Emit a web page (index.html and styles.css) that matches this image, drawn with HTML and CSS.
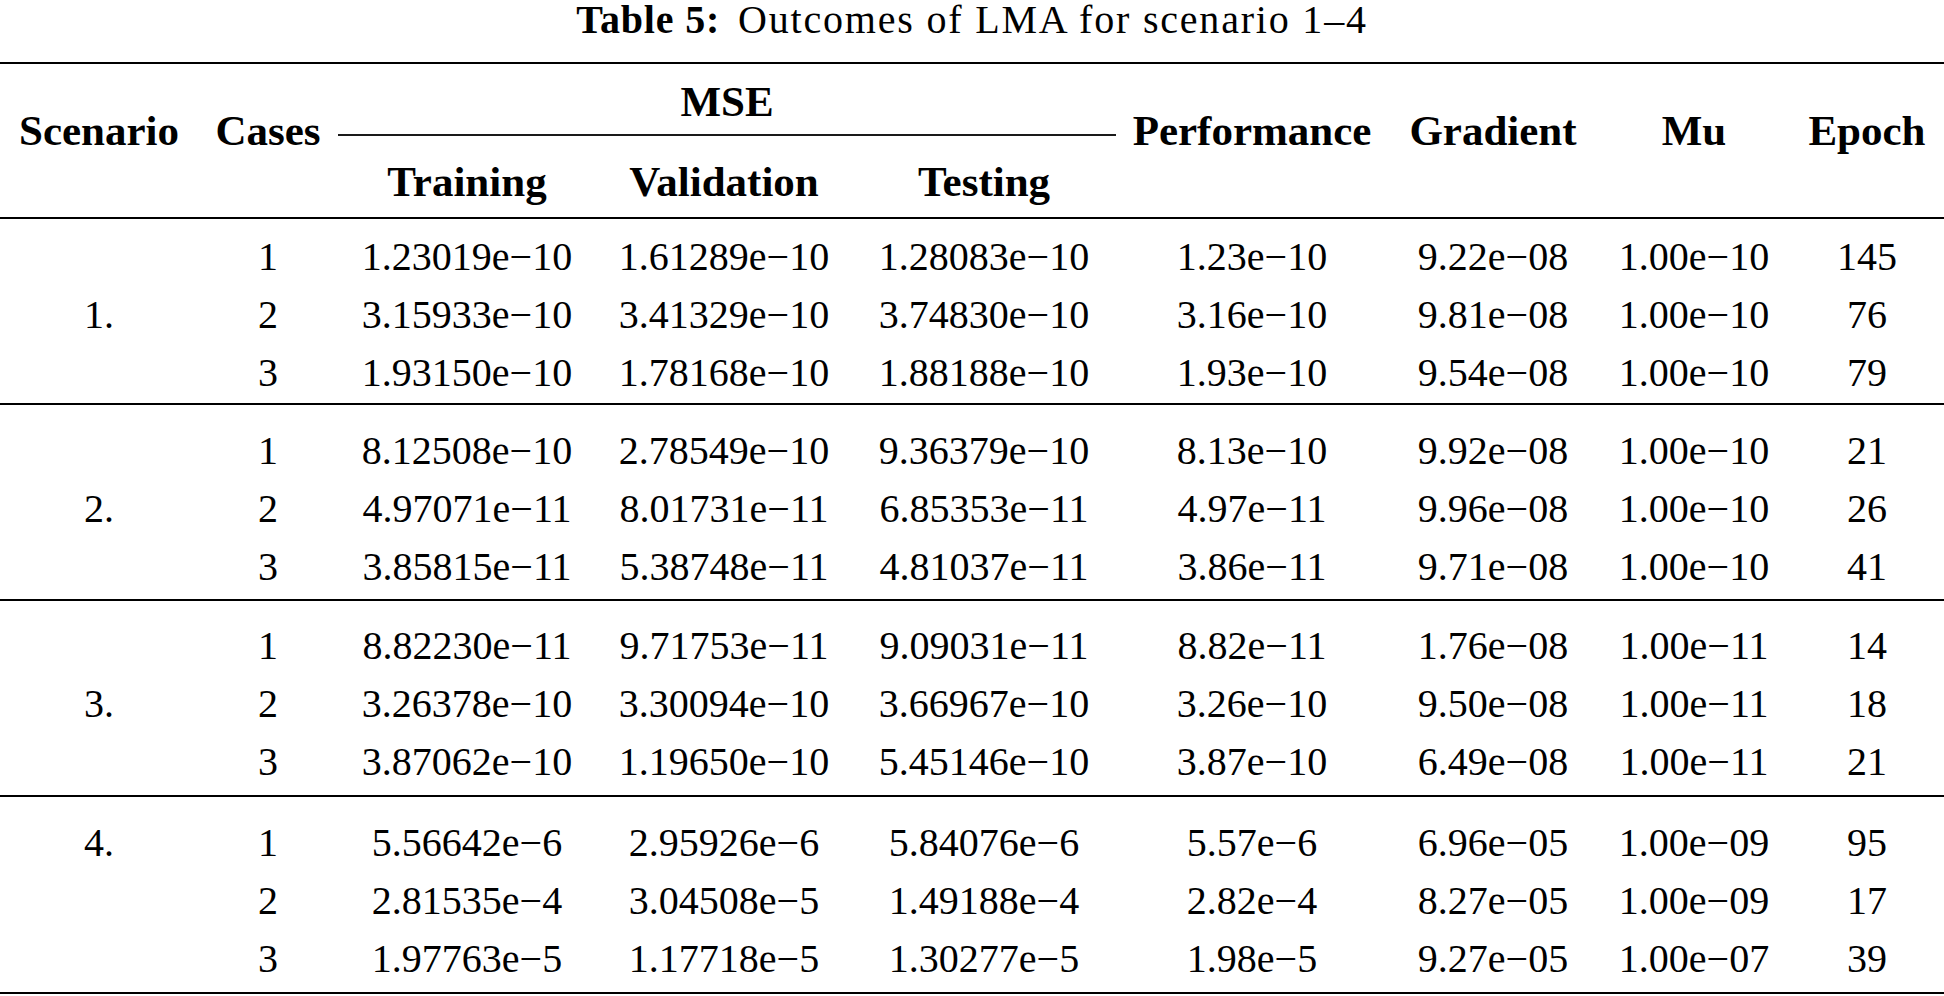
FILE: index.html
```html
<!DOCTYPE html>
<html lang="en">
<head>
<meta charset="utf-8">
<title>Table 5: Outcomes of LMA for scenario 1–4</title>
<link rel="stylesheet" href="styles.css">
</head>
<body>
<div class="page">
  <div class="caption"><span class="label">Table 5:</span>Outcomes of LMA for scenario 1–4</div>
  <table class="results">
    <colgroup>
      <col class="c-scen"><col class="c-case"><col class="c-tr"><col class="c-va"><col class="c-te"><col class="c-perf"><col class="c-grad"><col class="c-mu"><col class="c-ep">
    </colgroup>
    <thead>
      <tr>
        <th rowspan="2" class="span2">Scenario</th>
        <th rowspan="2" class="span2">Cases</th>
        <th colspan="3" class="group">MSE</th>
        <th rowspan="2" class="span2">Performance</th>
        <th rowspan="2" class="span2">Gradient</th>
        <th rowspan="2" class="span2">Mu</th>
        <th rowspan="2" class="span2">Epoch</th>
      </tr>
      <tr>
        <th class="sub">Training</th>
        <th class="sub">Validation</th>
        <th class="sub">Testing</th>
      </tr>
    </thead>
    <tbody class="g g1">
      <tr><td rowspan="3" class="scen">1.</td><td>1</td><td>1.23019e−10</td><td>1.61289e−10</td><td>1.28083e−10</td><td>1.23e−10</td><td>9.22e−08</td><td>1.00e−10</td><td>145</td></tr>
      <tr><td>2</td><td>3.15933e−10</td><td>3.41329e−10</td><td>3.74830e−10</td><td>3.16e−10</td><td>9.81e−08</td><td>1.00e−10</td><td>76</td></tr>
      <tr><td>3</td><td>1.93150e−10</td><td>1.78168e−10</td><td>1.88188e−10</td><td>1.93e−10</td><td>9.54e−08</td><td>1.00e−10</td><td>79</td></tr>
    </tbody>
    <tbody class="g g2">
      <tr><td rowspan="3" class="scen">2.</td><td>1</td><td>8.12508e−10</td><td>2.78549e−10</td><td>9.36379e−10</td><td>8.13e−10</td><td>9.92e−08</td><td>1.00e−10</td><td>21</td></tr>
      <tr><td>2</td><td>4.97071e−11</td><td>8.01731e−11</td><td>6.85353e−11</td><td>4.97e−11</td><td>9.96e−08</td><td>1.00e−10</td><td>26</td></tr>
      <tr><td>3</td><td>3.85815e−11</td><td>5.38748e−11</td><td>4.81037e−11</td><td>3.86e−11</td><td>9.71e−08</td><td>1.00e−10</td><td>41</td></tr>
    </tbody>
    <tbody class="g g3">
      <tr><td rowspan="3" class="scen">3.</td><td>1</td><td>8.82230e−11</td><td>9.71753e−11</td><td>9.09031e−11</td><td>8.82e−11</td><td>1.76e−08</td><td>1.00e−11</td><td>14</td></tr>
      <tr><td>2</td><td>3.26378e−10</td><td>3.30094e−10</td><td>3.66967e−10</td><td>3.26e−10</td><td>9.50e−08</td><td>1.00e−11</td><td>18</td></tr>
      <tr><td>3</td><td>3.87062e−10</td><td>1.19650e−10</td><td>5.45146e−10</td><td>3.87e−10</td><td>6.49e−08</td><td>1.00e−11</td><td>21</td></tr>
    </tbody>
    <tbody class="g g4">
      <tr><td rowspan="3" class="scen top">4.</td><td>1</td><td>5.56642e−6</td><td>2.95926e−6</td><td>5.84076e−6</td><td>5.57e−6</td><td>6.96e−05</td><td>1.00e−09</td><td>95</td></tr>
      <tr><td>2</td><td>2.81535e−4</td><td>3.04508e−5</td><td>1.49188e−4</td><td>2.82e−4</td><td>8.27e−05</td><td>1.00e−09</td><td>17</td></tr>
      <tr><td>3</td><td>1.97763e−5</td><td>1.17718e−5</td><td>1.30277e−5</td><td>1.98e−5</td><td>9.27e−05</td><td>1.00e−07</td><td>39</td></tr>
    </tbody>
  </table>
</div>
</body>
</html>
```
FILE: styles.css
```css
html, body {
  margin: 0;
  padding: 0;
  background: #ffffff;
}

body {
  color: #000000;
  font-family: "Liberation Serif", "Times New Roman", serif;
}

.page {
  width: 1944px;
}

.caption {
  text-align: center;
  font-size: 40px;
  line-height: 40px;
  height: 40px;
  margin-bottom: 22px;
  letter-spacing: 1.8px;
  white-space: nowrap;
}

.caption .label {
  font-weight: bold;
  letter-spacing: 0.8px;
  margin-right: 18px;
}

.results {
  width: 1944px;
  table-layout: fixed;
  border-collapse: separate;
  border-spacing: 0;
}

.c-scen { width: 198px; }
.c-case { width: 140px; }
.c-tr   { width: 258px; }
.c-va   { width: 256px; }
.c-te   { width: 264px; }
.c-perf { width: 272px; }
.c-grad { width: 210px; }
.c-mu   { width: 192px; }
.c-ep   { width: 154px; }

.results th {
  font-family: "Liberation Serif", "Times New Roman", serif;
  font-weight: bold;
  font-size: 43px;
  line-height: 50px;
  padding: 0;
  text-align: center;
  white-space: nowrap;
}

.results th.span2 {
  vertical-align: top;
  padding-top: 42px;
  border-top: 2px solid #000;
  border-bottom: 2px solid #000;
}

.results th.group {
  vertical-align: top;
  padding: 13px 0 7px;
  border-top: 2px solid #000;
  border-bottom: 2px solid #1a1a1a;
}

.results th.sub {
  vertical-align: top;
  padding: 21px 0 10px;
  border-bottom: 2px solid #000;
}

.results td {
  font-size: 40px;
  line-height: 58px;
  padding: 0;
  text-align: center;
  vertical-align: middle;
  white-space: nowrap;
}

.results td.top {
  vertical-align: top;
}

.g1 tr:first-child td { padding-top: 9px; }
.g1 tr:last-child td,
.g1 td.scen { padding-bottom: 1px; border-bottom: 2px solid #000; }

.g2 tr:first-child td { padding-top: 17px; }
.g2 tr:last-child td,
.g2 td.scen { padding-bottom: 3px; border-bottom: 2px solid #000; }

.g3 tr:first-child td { padding-top: 16px; }
.g3 tr:last-child td,
.g3 td.scen { padding-bottom: 4px; border-bottom: 2px solid #000; }

.g4 tr:first-child td { padding-top: 17px; }
.g4 tr:last-child td,
.g4 td.scen { padding-bottom: 4px; border-bottom: 2px solid #000; }
```
